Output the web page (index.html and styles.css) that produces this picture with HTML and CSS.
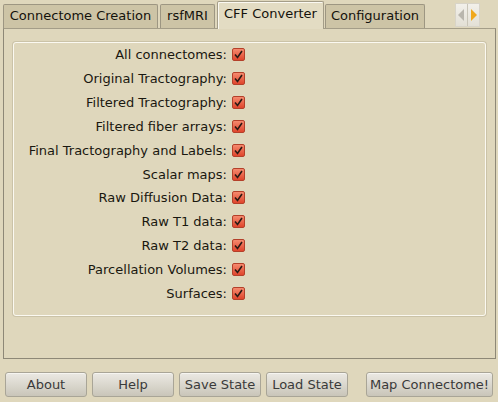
FILE: index.html
```html
<!DOCTYPE html>
<html>
<head>
<meta charset="utf-8">
<link rel="stylesheet" href="styles.css">
</head>
<body>
<div class="window">
  <div class="tabbar">
    <div class="tab w1">Connectome Creation</div>
    <div class="tab w2">rsfMRI</div>
    <div class="tab active w3">CFF Converter</div>
    <div class="tab w4">Configuration</div>
    <div class="spacer"></div>
    <div class="scroller">
      <div class="sbtn"><svg width="7" height="12" viewBox="0 0 7 12"><path d="M6 0 L0 6 L6 12 Z" fill="#b9b6ad"/></svg></div>
      <div class="sbtn"><svg width="7" height="12" viewBox="0 0 7 12"><path d="M1 0 L7 6 L1 12 Z" fill="#f0a81c"/></svg></div>
    </div>
  </div>
  <div class="pane">
    <div class="group">
      <div class="row"><span class="lbl">All connectomes:</span><span class="cb"><svg width="9" height="9" viewBox="0 0 9 9"><path d="M1 4.5 L3.5 7.5 L8 1" fill="none" stroke="#2a1a14" stroke-width="1.6"/></svg></span></div>
      <div class="row"><span class="lbl">Original Tractography:</span><span class="cb"><svg width="9" height="9" viewBox="0 0 9 9"><path d="M1 4.5 L3.5 7.5 L8 1" fill="none" stroke="#2a1a14" stroke-width="1.6"/></svg></span></div>
      <div class="row"><span class="lbl">Filtered Tractography:</span><span class="cb"><svg width="9" height="9" viewBox="0 0 9 9"><path d="M1 4.5 L3.5 7.5 L8 1" fill="none" stroke="#2a1a14" stroke-width="1.6"/></svg></span></div>
      <div class="row"><span class="lbl">Filtered fiber arrays:</span><span class="cb"><svg width="9" height="9" viewBox="0 0 9 9"><path d="M1 4.5 L3.5 7.5 L8 1" fill="none" stroke="#2a1a14" stroke-width="1.6"/></svg></span></div>
      <div class="row"><span class="lbl">Final Tractography and Labels:</span><span class="cb"><svg width="9" height="9" viewBox="0 0 9 9"><path d="M1 4.5 L3.5 7.5 L8 1" fill="none" stroke="#2a1a14" stroke-width="1.6"/></svg></span></div>
      <div class="row"><span class="lbl">Scalar maps:</span><span class="cb"><svg width="9" height="9" viewBox="0 0 9 9"><path d="M1 4.5 L3.5 7.5 L8 1" fill="none" stroke="#2a1a14" stroke-width="1.6"/></svg></span></div>
      <div class="row"><span class="lbl">Raw Diffusion Data:</span><span class="cb"><svg width="9" height="9" viewBox="0 0 9 9"><path d="M1 4.5 L3.5 7.5 L8 1" fill="none" stroke="#2a1a14" stroke-width="1.6"/></svg></span></div>
      <div class="row"><span class="lbl">Raw T1 data:</span><span class="cb"><svg width="9" height="9" viewBox="0 0 9 9"><path d="M1 4.5 L3.5 7.5 L8 1" fill="none" stroke="#2a1a14" stroke-width="1.6"/></svg></span></div>
      <div class="row"><span class="lbl">Raw T2 data:</span><span class="cb"><svg width="9" height="9" viewBox="0 0 9 9"><path d="M1 4.5 L3.5 7.5 L8 1" fill="none" stroke="#2a1a14" stroke-width="1.6"/></svg></span></div>
      <div class="row"><span class="lbl">Parcellation Volumes:</span><span class="cb"><svg width="9" height="9" viewBox="0 0 9 9"><path d="M1 4.5 L3.5 7.5 L8 1" fill="none" stroke="#2a1a14" stroke-width="1.6"/></svg></span></div>
      <div class="row"><span class="lbl">Surfaces:</span><span class="cb"><svg width="9" height="9" viewBox="0 0 9 9"><path d="M1 4.5 L3.5 7.5 L8 1" fill="none" stroke="#2a1a14" stroke-width="1.6"/></svg></span></div>
    </div>
  </div>
  <div class="buttons">
    <button class="btn b-small">About</button>
    <button class="btn b-small">Help</button>
    <button class="btn b-small">Save State</button>
    <button class="btn b-small">Load State</button>
    <div class="spacer"></div>
    <button class="btn b-map">Map Connectome!</button>
  </div>
</div>
</body>
</html>
```

FILE: styles.css
```css
html, body {
  margin: 0;
  padding: 0;
}
body {
  background: #dfd7bc;
  font-family: "DejaVu Sans", sans-serif;
  font-size: 13px;
  color: #1c1a14;
  width: 498px;
  height: 402px;
  overflow: hidden;
}
.window {
  display: flex;
  flex-direction: column;
}
.tabbar {
  display: flex;
  align-items: flex-end;
  height: 28px;
  padding-left: 3px;
  padding-right: 18px;
  position: relative;
  z-index: 1;
}
.tab {
  box-sizing: border-box;
  height: 24px;
  margin-right: 2px;
  background: #cdc4a6;
  border: 1px solid #9d9682;
  border-bottom: none;
  border-radius: 2px 2px 0 0;
  display: flex;
  align-items: center;
  justify-content: center;
  color: #14120c;
  white-space: nowrap;
  padding-bottom: 2px;
}
.tab.active {
  height: 28px;
  margin-bottom: -1px;
  margin-left: 0;
  margin-right: 1px;
  background: #e3dcc3;
  border-color: #a49d88;
  box-shadow: inset 1px 1px 0 #fbf9f2;
  padding-bottom: 5px;
}
.w1 { width: 155px; }
.w2 { width: 55px; }
.w3 { width: 107px; }
.w4 { width: 100px; }
.spacer { flex: 1; }
.scroller {
  display: flex;
  align-self: flex-start;
  margin-top: 3px;
  height: 22px;
  border: 1px solid #d8d4c8;
  background: #ece9e0;
}
.sbtn {
  width: 11px;
  display: flex;
  align-items: center;
  justify-content: center;
  background: linear-gradient(#f2f0ea, #e3e0d6);
}
.sbtn + .sbtn {
  border-left: 1px solid #c9c5b8;
}
.pane {
  box-sizing: border-box;
  margin: 0 2px 0 3px;
  height: 331px;
  border: 1px solid #8e8877;
  border-top-color: #a49d88;
  padding: 13px 9px 0 9px;
}
.group {
  box-sizing: border-box;
  height: 274px;
  border: 1px solid #fbf9f1;
  border-radius: 3px;
  box-shadow: 0 0 0 1px #cbc3a8;
  padding-top: 0;
  display: flex;
  flex-direction: column;
}
.row {
  height: 23.85px;
  display: flex;
  align-items: center;
}
.lbl {
  width: 213px;
  text-align: right;
  color: #1a1810;
}
.cb {
  box-sizing: border-box;
  width: 13px;
  height: 13px;
  margin-left: 5px;
  border: 1px solid #b4402a;
  border-radius: 2px;
  background: linear-gradient(#f58a6e, #e0452c);
  display: flex;
  align-items: center;
  justify-content: center;
}
.buttons {
  display: flex;
  padding: 13px 5px 0 5px;
  gap: 5px;
}
.btn {
  box-sizing: border-box;
  height: 25px;
  font-family: "DejaVu Sans", sans-serif;
  font-size: 13px;
  color: #3a3a3a;
  border: 1px solid #a9a597;
  border-radius: 3px;
  background: linear-gradient(#ebe9e3, #d9d6cc 55%, #c9c5b9);
  box-shadow: inset 0 1px 0 #f6f5f1;
  padding: 0;
}
.b-small { width: 82px; }
.b-map { width: 127px; }
```
